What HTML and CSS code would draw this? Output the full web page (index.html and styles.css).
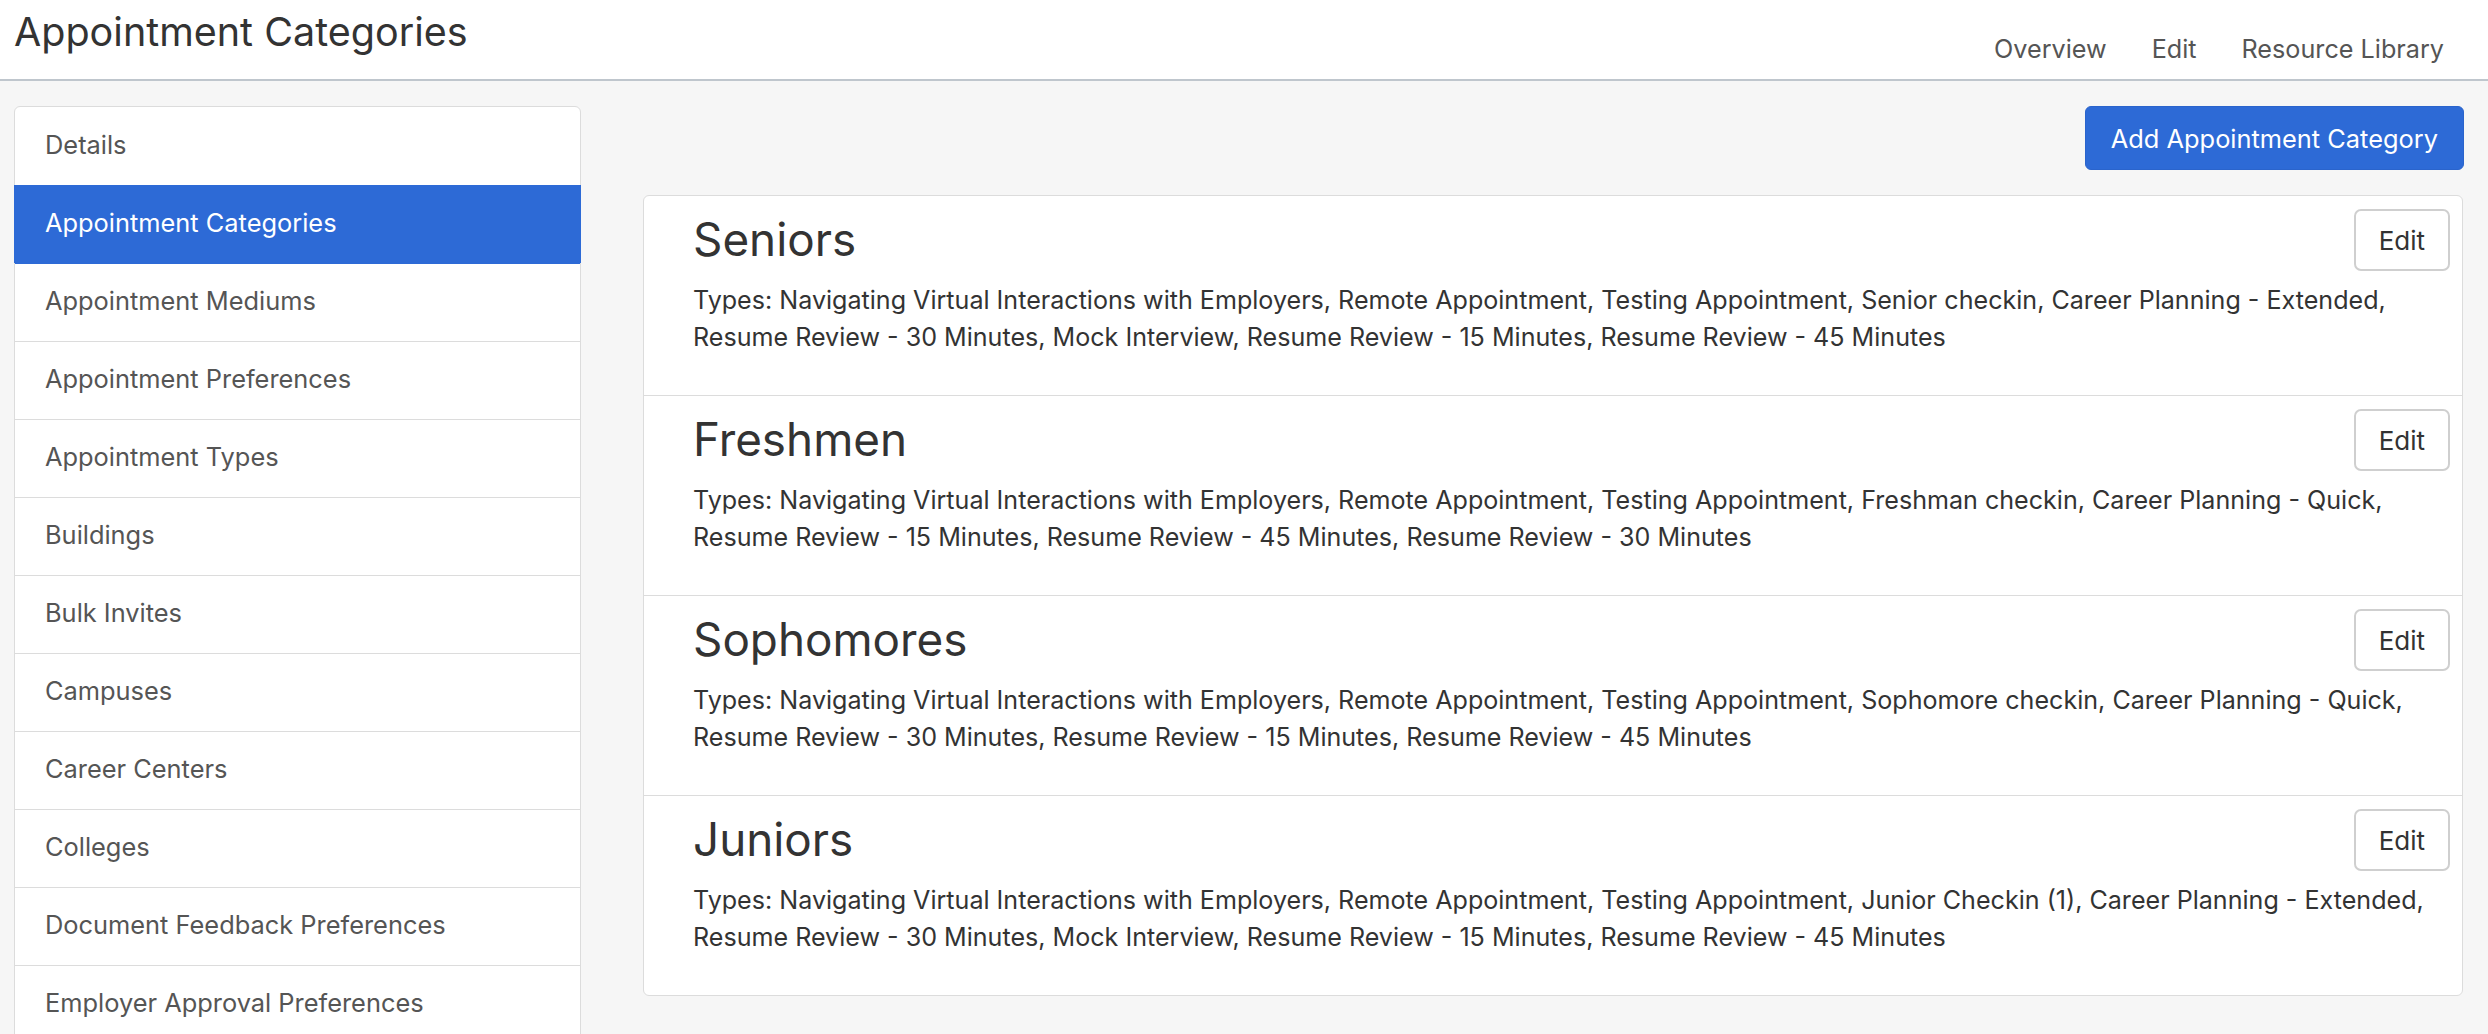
FILE: index.html
```html
<!DOCTYPE html>
<html lang="en">
<head>
<meta charset="utf-8">
<title>Appointment Categories</title>
<link rel="stylesheet" href="styles.css">
</head>
<body>
<header class="topbar">
  <h1 class="page-title">Appointment Categories</h1>
  <nav class="top-nav">
    <a class="top-link" href="#">Overview</a>
    <a class="top-link" href="#">Edit</a>
    <a class="top-link" href="#">Resource Library</a>
  </nav>
</header>
<div class="layout">
  <aside class="side-list">
    <a class="side-item" href="#">Details</a>
    <a class="side-item active" href="#">Appointment Categories</a>
    <a class="side-item" href="#">Appointment Mediums</a>
    <a class="side-item" href="#">Appointment Preferences</a>
    <a class="side-item" href="#">Appointment Types</a>
    <a class="side-item" href="#">Buildings</a>
    <a class="side-item" href="#">Bulk Invites</a>
    <a class="side-item" href="#">Campuses</a>
    <a class="side-item" href="#">Career Centers</a>
    <a class="side-item" href="#">Colleges</a>
    <a class="side-item" href="#">Document Feedback Preferences</a>
    <a class="side-item" href="#">Employer Approval Preferences</a>
  </aside>
  <main class="content">
    <div class="toolbar">
      <button class="btn-primary" type="button">Add Appointment Category</button>
    </div>
    <section class="cat-card">
      <div class="cat-row">
        <div class="cat-head">
          <h2 class="cat-name">Seniors</h2>
          <button class="btn-edit" type="button">Edit</button>
        </div>
        <p class="cat-types">Types: Navigating Virtual Interactions with Employers, Remote Appointment, Testing Appointment, Senior checkin, Career Planning - Extended, Resume Review - 30 Minutes, Mock Interview, Resume Review - 15 Minutes, Resume Review - 45 Minutes</p>
      </div>
      <div class="cat-row">
        <div class="cat-head">
          <h2 class="cat-name">Freshmen</h2>
          <button class="btn-edit" type="button">Edit</button>
        </div>
        <p class="cat-types">Types: Navigating Virtual Interactions with Employers, Remote Appointment, Testing Appointment, Freshman checkin, Career Planning - Quick, Resume Review - 15 Minutes, Resume Review - 45 Minutes, Resume Review - 30 Minutes</p>
      </div>
      <div class="cat-row">
        <div class="cat-head">
          <h2 class="cat-name">Sophomores</h2>
          <button class="btn-edit" type="button">Edit</button>
        </div>
        <p class="cat-types">Types: Navigating Virtual Interactions with Employers, Remote Appointment, Testing Appointment, Sophomore checkin, Career Planning - Quick, Resume Review - 30 Minutes, Resume Review - 15 Minutes, Resume Review - 45 Minutes</p>
      </div>
      <div class="cat-row">
        <div class="cat-head">
          <h2 class="cat-name">Juniors</h2>
          <button class="btn-edit" type="button">Edit</button>
        </div>
        <p class="cat-types">Types: Navigating Virtual Interactions with Employers, Remote Appointment, Testing Appointment, Junior Checkin (1), Career Planning - Extended, Resume Review - 30 Minutes, Mock Interview, Resume Review - 15 Minutes, Resume Review - 45 Minutes</p>
      </div>
    </section>
  </main>
</div>
</body>
</html>
```

FILE: styles.css
```css
html, body {
  margin: 0;
  padding: 0;
  height: 100%;
  overflow: hidden;
}

body {
  font-family: "Inter", "Liberation Sans", sans-serif;
  background: #f6f6f6;
  color: #333;
}

.topbar {
  display: flex;
  justify-content: space-between;
  align-items: flex-start;
  height: 81px;
  padding: 8px 44px 0 14px;
  background: #fff;
  border-bottom: 2px solid #bfc6cd;
  box-sizing: border-box;
}

.page-title {
  margin: 0;
  font-size: 39.5px;
  line-height: 48px;
  font-weight: 400;
  color: #333;
}

.top-nav {
  display: flex;
  gap: 45px;
  margin-top: 24px;
}

.top-link {
  font-size: 25.2px;
  line-height: 35px;
  color: #555;
  text-decoration: none;
}

.layout {
  display: flex;
  align-items: flex-start;
  gap: 62px;
  padding: 25px 24px 0 14px;
}

.side-list {
  flex: none;
  width: 567px;
  box-sizing: border-box;
  display: flex;
  flex-direction: column;
  background: #fff;
  border: 1px solid #dcdcdc;
  border-radius: 6px 6px 0 0;
}

.side-item {
  display: block;
  padding: 18px 30px 21px;
  font-size: 25.4px;
  line-height: 38px;
  color: #555;
  text-decoration: none;
  border-top: 1px solid #dcdcdc;
}

.side-item:first-child {
  border-top: none;
  border-radius: 6px 6px 0 0;
  padding-top: 19px;
}

.side-item.active {
  background: #2d6ad6;
  color: #fff;
  border-top-color: #2d6ad6;
  margin: 0 -1px;
  padding-left: 31px;
  padding-right: 31px;
}

.side-item.active + .side-item {
  border-top-color: #2d6ad6;
}

.content {
  flex: 1;
  min-width: 0;
}

.toolbar {
  display: flex;
  justify-content: flex-end;
  margin-bottom: 25px;
}

.btn-primary {
  height: 64px;
  padding: 0 25px;
  font-family: inherit;
  font-size: 25.4px;
  color: #fff;
  background: #2d6ad6;
  border: 1px solid #2a64cc;
  border-radius: 6px;
  cursor: pointer;
}

.cat-card {
  background: #fff;
  border: 1px solid #dcdcdc;
  border-radius: 6px;
  margin-right: 1px;
}

.cat-row {
  padding: 17px 20px 39px 49px;
  border-top: 1px solid #dcdcdc;
}

.cat-row:first-child {
  border-top: none;
}

.cat-head {
  display: flex;
  justify-content: space-between;
  align-items: flex-start;
  margin-bottom: 15px;
}

.cat-name {
  margin: 0;
  font-size: 45.8px;
  line-height: 54px;
  font-weight: 400;
  color: #333;
}

.btn-edit {
  height: 62px;
  margin: -4px -8px -4px 0;
  padding: 0 23px;
  font-family: inherit;
  font-size: 26px;
  color: #333;
  background: #fff;
  border: 2px solid #cfcfcf;
  border-radius: 7px;
  cursor: pointer;
}

.cat-types {
  margin: 0;
  font-size: 25.1px;
  line-height: 37px;
  color: #333;
}
```
